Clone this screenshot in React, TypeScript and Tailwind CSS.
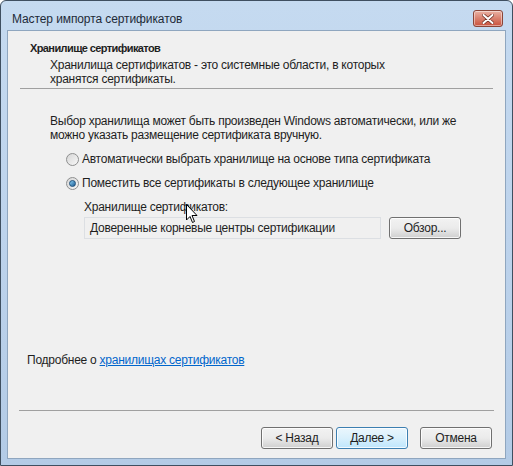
import React from "react";

const font = { fontFamily: '"Segoe UI", "Liberation Sans", Arial, sans-serif' };

function Radio({ checked }: { checked?: boolean }) {
  return (
    <span className="relative flex h-[13px] w-[13px] items-center justify-center rounded-full border border-[#8e8f8f] bg-gradient-to-br from-[#d6d6d6] to-[#f8f8f8]">
      {checked && (
        <span className="h-[7px] w-[7px] rounded-full border border-[#1d4f7a] bg-gradient-to-br from-[#8ad0f6] to-[#1a5d93]" />
      )}
    </span>
  );
}

function Btn({ children, def }: { children: React.ReactNode; def?: boolean }) {
  return (
    <button
      className={
        def
          ? "w-[72px] h-[22px] rounded-[3px] border border-[#3c7fb1] bg-gradient-to-b from-[#eaf6fd] via-[#d9f0fc] to-[#bee6fd] text-[12px] leading-[20px] text-[#1e1e1e] shadow-[inset_0_0_0_1px_rgba(255,255,255,0.8)]"
          : "w-[72px] h-[22px] rounded-[3px] border border-[#707070] bg-gradient-to-b from-[#f2f2f2] via-[#ebebeb] to-[#cfcfcf] text-[12px] leading-[20px] text-[#1e1e1e] shadow-[inset_0_0_0_1px_rgba(255,255,255,0.8)]"
      }
    >
      {children}
    </button>
  );
}

export default function App() {
  return (
    <div className="relative w-[513px] h-[466px] overflow-hidden" style={font}>
      <div className="flex h-full w-full flex-col rounded-t-[6px] border border-[#3f4f60] bg-gradient-to-b from-[#c5daf0] via-[#bdd3ec] to-[#b3cbe6]">
        {/* title bar */}
        <div className="flex h-[29px] shrink-0 items-center justify-between pl-[11px] pr-[9px]">
          <span className="text-[12px] tracking-[-0.1px] text-[#1e2a38] pt-[6px]">Мастер импорта сертификатов</span>
          <div className="mt-[6px] flex h-[17px] w-[30px] items-center justify-center rounded-[3px] border border-[#8a4538] bg-gradient-to-b from-[#eab2a4] via-[#d9806e] to-[#c9503c] shadow-[inset_0_0_0_1px_rgba(255,255,255,0.45)]">
            <svg width="12" height="10" viewBox="0 0 12 10">
              <path d="M1.5 1 L10.5 9 M10.5 1 L1.5 9" stroke="#6a2a20" strokeWidth="3.4" strokeLinecap="round" />
              <path d="M1.5 1 L10.5 9 M10.5 1 L1.5 9" stroke="#ffffff" strokeWidth="2" strokeLinecap="round" />
            </svg>
          </div>
        </div>

        {/* content */}
        <div className="mx-[6px] mb-[6px] flex flex-1 flex-col border border-[#8fa6bf] bg-[#f0f0f0] text-[12px] leading-[14px] tracking-[-0.25px] text-[#1e1e1e]">
          <div className="pl-[22px] pt-[10px] text-[11px] font-bold tracking-[-0.6px]">Хранилище сертификатов</div>
          <div className="mt-[3px] pl-[42px]">
            Хранилища сертификатов - это системные области, в которых
            <br />
            хранятся сертификаты.
          </div>
          <div className="mx-[12px] mt-[2px] h-[2px] border-t border-[#a0a0a0] border-b-white" />

          <div className="mt-[24px] pl-[42px]">
            Выбор хранилища может быть произведен Windows автоматически, или же
            <br />
            можно указать размещение сертификата вручную.
          </div>

          <div className="mt-[10px] flex items-center gap-[3px] pl-[58px]">
            <Radio />
            <span>Автоматически выбрать хранилище на основе типа сертификата</span>
          </div>
          <div className="mt-[10px] flex items-center gap-[3px] pl-[58px]">
            <Radio checked />
            <span>Поместить все сертификаты в следующее хранилище</span>
          </div>

          <div className="mt-[10px] pl-[76px]">Хранилище сертификатов:</div>
          <div className="mt-[3px] flex gap-[8px] pl-[76px]">
            <div className="h-[22px] w-[297px] border border-[#dcdfe3] bg-[#f0f0f0] pl-[5px] leading-[20px]">
              Доверенные корневые центры сертификации
            </div>
            <Btn>Обзор...</Btn>
          </div>

          <div className="mt-[114px] pl-[19px]">
            Подробнее о{" "}
            <span className="text-[#0066cc] underline">хранилищах сертификатов</span>
          </div>

          <div className="mt-auto mx-[11px] h-[2px] border-t border-[#a0a0a0] border-b-white" />
          <div className="flex justify-end pr-[13px] pt-[15px] pb-[9px]">
            <div className="flex gap-[3px]">
              <Btn>&lt; Назад</Btn>
              <Btn def>Далее &gt;</Btn>
            </div>
            <div className="ml-[12px]">
              <Btn>Отмена</Btn>
            </div>
          </div>
        </div>
      </div>

      {/* mouse pointer */}
      <svg className="absolute left-[186px] top-[204px]" width="12" height="20" viewBox="0 0 12 20">
        <path d="M0.5 0.5 L0.5 16 L4 12.5 L6.5 18.5 L8.5 17.5 L6 11.5 L11 11.5 Z" fill="#ffffff" stroke="#000000" strokeWidth="1" strokeLinejoin="round" />
      </svg>
    </div>
  );
}
